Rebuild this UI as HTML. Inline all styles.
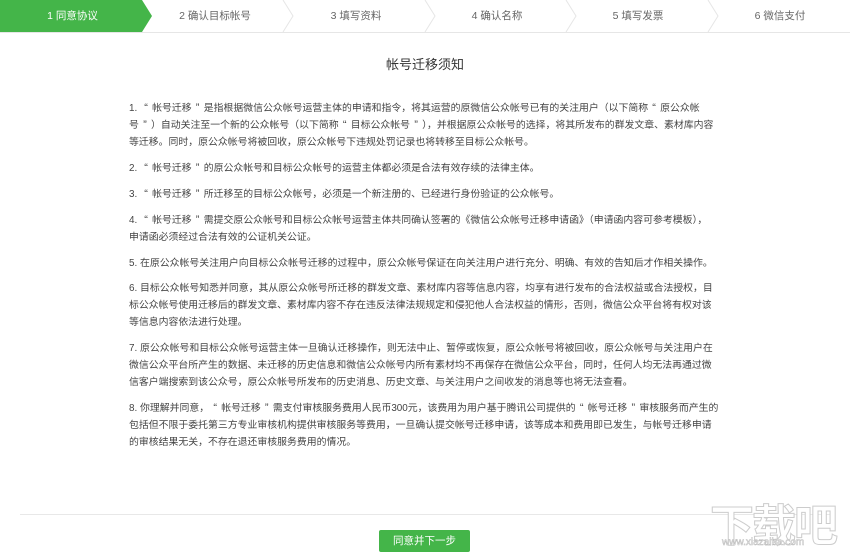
<!DOCTYPE html>
<html><head><meta charset="utf-8"><style>
body{margin:0;width:850px;height:556px;background:#fff;font-family:"Liberation Sans","Noto Sans CJK SC",sans-serif;position:relative;overflow:hidden}
.steps{position:absolute;left:0;top:0;width:850px;height:32px;border-bottom:1px solid #e6e6e6;}
.st{position:absolute;top:0;height:32px;line-height:32px;font-size:10.5px;color:#666;text-align:center}
.title{position:absolute;top:54px;left:0;width:850px;text-align:center;font-size:13px;color:#333}
.txt{position:absolute;left:129px;top:100px;font-size:9.9px;color:#444;line-height:17px;white-space:nowrap}
.txt p{margin:0 0 8.9px 0;height:auto}
.q{font-family:"Liberation Sans",sans-serif;font-size:11px;line-height:1px;display:inline-block;width:1.1em;text-align:center;vertical-align:baseline}
.hr{position:absolute;left:20px;top:514px;width:810px;height:1px;background:#e8e8e8}
.btn{position:absolute;left:379px;top:530px;width:91px;height:22px;background:#44b549;border-radius:2px;color:#fff;font-size:10.5px;text-align:center;line-height:22px}
</style></head><body>
<div class="steps">
<svg width="850" height="33" style="position:absolute;left:0;top:0">
<polygon points="0,0 142,0 152,16 142,32 0,32" fill="#44b549"/>
<polyline points="283,0 293,16 283,32" fill="none" stroke="#e6e6e6"/>
<polyline points="425,0 435,16 425,32" fill="none" stroke="#e6e6e6"/>
<polyline points="566,0 576,16 566,32" fill="none" stroke="#e6e6e6"/>
<polyline points="708,0 718,16 708,32" fill="none" stroke="#e6e6e6"/>
</svg>
<div class="st" style="left:0;width:145px;color:#fff">1 同意协议</div>
<div class="st" style="left:145px;width:140px">2 确认目标帐号</div>
<div class="st" style="left:286px;width:140px">3 填写资料</div>
<div class="st" style="left:427px;width:140px">4 确认名称</div>
<div class="st" style="left:568px;width:140px">5 填写发票</div>
<div class="st" style="left:710px;width:140px">6 微信支付</div>
</div>
<div class="title">帐号迁移须知</div>
<div class="txt">
<p>1. <span class="q">“</span>帐号迁移<span class="q">”</span>是指根据微信公众帐号运营主体的申请和指令，将其运营的原微信公众帐号已有的关注用户（以下简称<span class="q">“</span>原公众帐<br>号<span class="q">”</span>）自动关注至一个新的公众帐号（以下简称<span class="q">“</span>目标公众帐号<span class="q">”</span>），并根据原公众帐号的选择，将其所发布的群发文章、素材库内容<br>等迁移。同时，原公众帐号将被回收，原公众帐号下违规处罚记录也将转移至目标公众帐号。</p>
<p>2. <span class="q">“</span>帐号迁移<span class="q">”</span>的原公众帐号和目标公众帐号的运营主体都必须是合法有效存续的法律主体。</p>
<p>3. <span class="q">“</span>帐号迁移<span class="q">”</span>所迁移至的目标公众帐号，必须是一个新注册的、已经进行身份验证的公众帐号。</p>
<p>4. <span class="q">“</span>帐号迁移<span class="q">”</span>需提交原公众帐号和目标公众帐号运营主体共同确认签署的《微信公众帐号迁移申请函》（申请函内容可参考模板），<br>申请函必须经过合法有效的公证机关公证。</p>
<p>5. 在原公众帐号关注用户向目标公众帐号迁移的过程中，原公众帐号保证在向关注用户进行充分、明确、有效的告知后才作相关操作。</p>
<p>6. 目标公众帐号知悉并同意，其从原公众帐号所迁移的群发文章、素材库内容等信息内容，均享有进行发布的合法权益或合法授权，目<br>标公众帐号使用迁移后的群发文章、素材库内容不存在违反法律法规规定和侵犯他人合法权益的情形，否则，微信公众平台将有权对该<br>等信息内容依法进行处理。</p>
<p>7. 原公众帐号和目标公众帐号运营主体一旦确认迁移操作，则无法中止、暂停或恢复，原公众帐号将被回收，原公众帐号与关注用户在<br>微信公众平台所产生的数据、未迁移的历史信息和微信公众帐号内所有素材均不再保存在微信公众平台，同时，任何人均无法再通过微<br>信客户端搜索到该公众号，原公众帐号所发布的历史消息、历史文章、与关注用户之间收发的消息等也将无法查看。</p>
<p>8. 你理解并同意，<span class="q">“</span>帐号迁移<span class="q">”</span>需支付审核服务费用人民币300元，该费用为用户基于腾讯公司提供的<span class="q">“</span>帐号迁移<span class="q">”</span>审核服务而产生的<br>包括但不限于委托第三方专业审核机构提供审核服务等费用，一旦确认提交帐号迁移申请，该等成本和费用即已发生，与帐号迁移申请<br>的审核结果无关，不存在退还审核服务费用的情况。</p>
</div>
<div class="hr"></div>
<div class="btn">同意并下一步</div>
<div style="position:absolute;left:710px;top:490px;font-size:44px;font-weight:bold;color:#fff;-webkit-text-stroke:1px #ccc;letter-spacing:-2px">下载吧</div>
<div style="position:absolute;left:722px;top:537px;font-size:10px;color:#fff;-webkit-text-stroke:0.5px #bbb">www.xiazaiba.com</div>
</body></html>
